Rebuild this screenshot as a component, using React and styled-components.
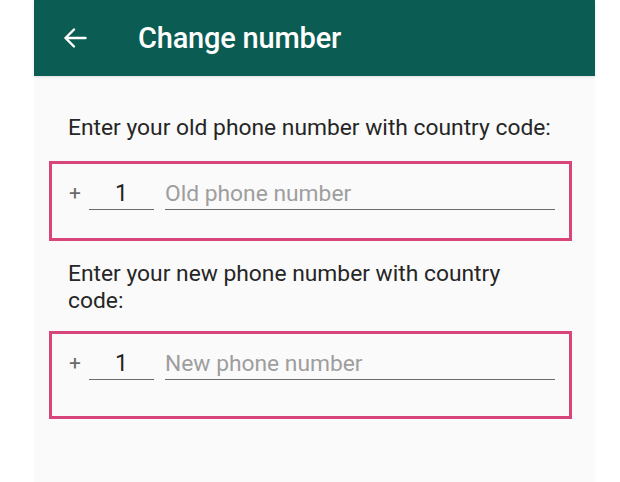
import styled, { createGlobalStyle } from "styled-components";

const GlobalStyle = createGlobalStyle`
  html, body {
    margin: 0;
    padding: 0;
    background: #ffffff;
    font-family: Roboto, "Noto Sans", "Liberation Sans", sans-serif;
  }
`;

const BackArrow = () => (
  <svg width="24" height="22" viewBox="0 0 24 22" fill="none">
    <path
      d="M22.5 11H2.5M11 2.5L2.5 11l8.5 8.5"
      stroke="#ffffff"
      strokeWidth="2.4"
      strokeLinecap="round"
      strokeLinejoin="round"
    />
  </svg>
);

const NumberField = ({ placeholder }) => (
  <FieldRow>
    <Plus>+</Plus>
    <CodeInput>1</CodeInput>
    <PhoneInput>{placeholder}</PhoneInput>
  </FieldRow>
);

const App = () => {
  return (
    <>
      <GlobalStyle />
      <Page>
        <Screen>
          <Toolbar>
            <IconButton>
              <BackArrow />
            </IconButton>
            <Title>Change number</Title>
          </Toolbar>
          <Content>
            <Label>Enter your old phone number with country code:</Label>
            <Highlight $gap={20} $bottom={28}>
              <NumberField placeholder="Old phone number" />
            </Highlight>
            <Label $top={19}>Enter your new phone number with country code:</Label>
            <Highlight $gap={17} $bottom={36}>
              <NumberField placeholder="New phone number" />
            </Highlight>
          </Content>
        </Screen>
      </Page>
    </>
  );
};

export default App;

const Page = styled.div`
  display: flex;
  justify-content: flex-start;
  width: 620px;
  height: 482px;
  padding-left: 34px;
  box-sizing: border-box;
  overflow: hidden;
`;

const Screen = styled.div`
  display: flex;
  flex-direction: column;
  width: 561px;
  height: 100%;
  background: #fafafa;
`;

const Toolbar = styled.div`
  display: flex;
  align-items: center;
  height: 76px;
  flex-shrink: 0;
  background: #0b5d53;
  box-shadow: 0 1px 3px rgba(0, 0, 0, 0.12);
  padding-left: 29px;
  box-sizing: border-box;
`;

const IconButton = styled.div`
  display: flex;
  align-items: center;
  width: 24px;
  height: 22px;
  margin-right: 51px;
`;

const Title = styled.h1`
  margin: 0;
  color: #ffffff;
  font-size: 29px;
  font-weight: 500;
  letter-spacing: -0.2px;
`;

const Content = styled.div`
  display: flex;
  flex-direction: column;
  padding: 38px 23px 0 15px;
`;

const Label = styled.p`
  margin: ${(p) => p.$top || 0}px 0 0 19px;
  width: 488px;
  font-size: 22.8px;
  line-height: 27px;
  color: #262626;
`;

const Highlight = styled.div`
  margin-top: ${(p) => p.$gap}px;
  border: 3px solid #d8457b;
  padding: 14px 14px ${(p) => p.$bottom}px 17px;
`;

const FieldRow = styled.div`
  display: flex;
  align-items: flex-end;
  gap: 11px;
`;

const Plus = styled.span`
  width: 12px;
  font-size: 21px;
  line-height: 27px;
  color: #6b6b6b;
  padding-bottom: 3px;
  margin-right: -3px;
`;

const CodeInput = styled.div`
  width: 65px;
  text-align: center;
  font-size: 23px;
  line-height: 31px;
  color: #222222;
  border-bottom: 1.5px solid #6b6b6b;
`;

const PhoneInput = styled.div`
  flex: 1;
  font-size: 22.8px;
  line-height: 31px;
  color: #9e9e9e;
  border-bottom: 1.5px solid #6b6b6b;
`;
